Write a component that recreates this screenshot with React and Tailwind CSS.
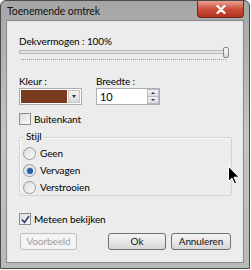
import React from "react";

function Radio({ checked, label }) {
  return (
    <div className="flex items-center h-[17px]">
      <div className="w-[13px] h-[13px] rounded-full border border-[#9a9a9a] bg-gradient-to-br from-[#dcdcdc] to-[#fafafa] flex items-center justify-center">
        {checked && <div className="w-[6px] h-[6px] rounded-full bg-[#2a5fa8] shadow-[0_0_2px_#6fa8e8]" />}
      </div>
      <span className="ml-[4px]">{label}</span>
    </div>
  );
}

function Check({ checked, label }) {
  return (
    <div className="flex items-center h-[14px]">
      <div className="w-[12px] h-[12px] border border-[#8e8f8f] bg-gradient-to-br from-[#dcdcdc] to-[#fbfbfb] flex items-center justify-center">
        {checked && (
          <svg width="9" height="9" viewBox="0 0 9 9">
            <path d="M1 4.5 L3.5 7.5 L8 1" fill="none" stroke="#2c3e7a" strokeWidth="1.6" />
          </svg>
        )}
      </div>
      <span className="ml-[3px]">{label}</span>
    </div>
  );
}

function Btn({ children, disabled, w }) {
  return (
    <div
      className={`h-[17px] ${w} rounded-[3px] border flex items-center justify-center ${
        disabled
          ? "border-[#bdbdbd] bg-[#f4f4f4] text-[#a0a0a0]"
          : "border-[#707070] bg-gradient-to-b from-[#f3f3f3] via-[#e8e8e8] to-[#d6d6d6] text-[#111]"
      }`}
    >
      {children}
    </div>
  );
}

export default function App() {
  return (
    <div className="w-[251px] h-[270px] bg-white tracking-[-0.1px]" style={{ fontFamily: 'Lato, "Noto Sans", sans-serif' }}>
      <div className="w-[250px] h-[269px] rounded-t-[6px] border border-[#4a4a4a] bg-gradient-to-b from-[#a6a6a6] via-[#c4c4c4] to-[#b9b9b9] flex flex-col">
        <div className="h-[20px] flex items-start justify-between shrink-0">
          <span className="ml-[6px] mt-[3px] text-[10.5px] leading-[14px] text-[#111]">Toenemende omtrek</span>
          <div className="mr-[5px] w-[47px] h-[17px] rounded-b-[4px] border border-[#6b2a22] border-t-0 bg-gradient-to-b from-[#e8a090] via-[#c9503d] to-[#b8301e] flex items-center justify-center">
            <svg width="10" height="9" viewBox="0 0 10 9">
              <path d="M1.5 1 L8.5 8 M8.5 1 L1.5 8" stroke="white" strokeWidth="2.2" strokeLinecap="round" />
            </svg>
          </div>
        </div>
        <div className="mx-[6px] mb-[6px] flex-1 border border-[#e8e8e8] shadow-[0_0_0_1px_#8a8a8a] bg-[#ececec] text-[10px] leading-[15px] text-black flex flex-col px-[11px] pt-[12px]">
          <div>Dekvermogen : 100%</div>
          <div className="relative h-[13px] mr-[2px]">
            <div className="absolute left-0 right-[2px] top-[1px] h-[4px] border border-[#b8b8b8] bg-[#e4e4e4]" />
            <div className="absolute right-0 top-[-2px] w-[6px] h-[11px] rounded-[2px] border border-[#8a8a8a] bg-gradient-to-b from-[#fafafa] to-[#d8d8d8]" />
            <div className="absolute left-[2px] right-[3px] top-[10px] h-[2px] border-t border-dotted border-[#9a9a9a]" />
          </div>
          <div className="flex mt-[12px]">
            <div className="w-[77px]">
              <div>Kleur :</div>
              <div className="mt-[-1px] h-[17px] w-[63px] border border-[#abadb3] bg-white flex p-[1px]">
                <div className="flex-1 bg-[#7a3a1e]" />
                <div className="w-[12px] ml-[1px] border border-[#c8c8c8] bg-gradient-to-b from-[#f2f2f2] to-[#dcdcdc] flex items-center justify-center">
                  <div className="w-0 h-0 border-l-[2.5px] border-r-[2.5px] border-t-[3px] border-l-transparent border-r-transparent border-t-[#333]" />
                </div>
              </div>
            </div>
            <div>
              <div>Breedte :</div>
              <div className="mt-[-1px] h-[17px] w-[64px] border border-[#abadb3] bg-white flex">
                <span className="ml-[3px] flex-1 leading-[15px] text-[11px]">10</span>
                <div className="w-[12px] flex flex-col">
                  <div className="flex-1 border border-[#b8b8c8] bg-gradient-to-b from-[#f0f0f4] to-[#dcdce4] flex items-center justify-center">
                    <div className="w-0 h-0 border-l-[2px] border-r-[2px] border-b-[2px] border-l-transparent border-r-transparent border-b-[#333]" />
                  </div>
                  <div className="flex-1 border border-t-0 border-[#b8b8c8] bg-gradient-to-b from-[#f0f0f4] to-[#dcdce4] flex items-center justify-center">
                    <div className="w-0 h-0 border-l-[2px] border-r-[2px] border-t-[2px] border-l-transparent border-r-transparent border-t-[#333]" />
                  </div>
                </div>
              </div>
            </div>
          </div>
          <div className="mt-[7px]">
            <Check label="Buitenkant" />
          </div>
          <div className="relative mt-[11px] mr-[-1px] h-[59px] border border-[#d4d4d4] rounded-[2px] shadow-[inset_1px_1px_0_#fafafa] pl-[3px] pt-[7px]">
            <span className="absolute left-[4px] top-[-9px] bg-[#ececec] px-[2px]">Stijl</span>
            <Radio label="Geen" />
            <Radio label="Vervagen" checked />
            <Radio label="Verstrooien" />
            <svg className="absolute right-[-9px] top-[28px]" width="12" height="19" viewBox="0 0 12 19">
              <path d="M0.5 0.5 L0.5 15.5 L4 12 L6.5 18 L8.5 17 L6 11.2 L11 11.2 Z" fill="#000" stroke="#fff" strokeWidth="1" />
            </svg>
          </div>
          <div className="mt-[16px]">
            <Check label="Meteen bekijken" checked />
          </div>
          <div className="flex mt-[7px] ml-[1px]">
            <Btn disabled w="w-[58px]">Voorbeeld</Btn>
            <div className="ml-[31px]">
              <Btn w="w-[58px]">Ok</Btn>
            </div>
            <div className="ml-[5px]">
              <Btn w="w-[60px]">Annuleren</Btn>
            </div>
          </div>
        </div>
      </div>
    </div>
  );
}
